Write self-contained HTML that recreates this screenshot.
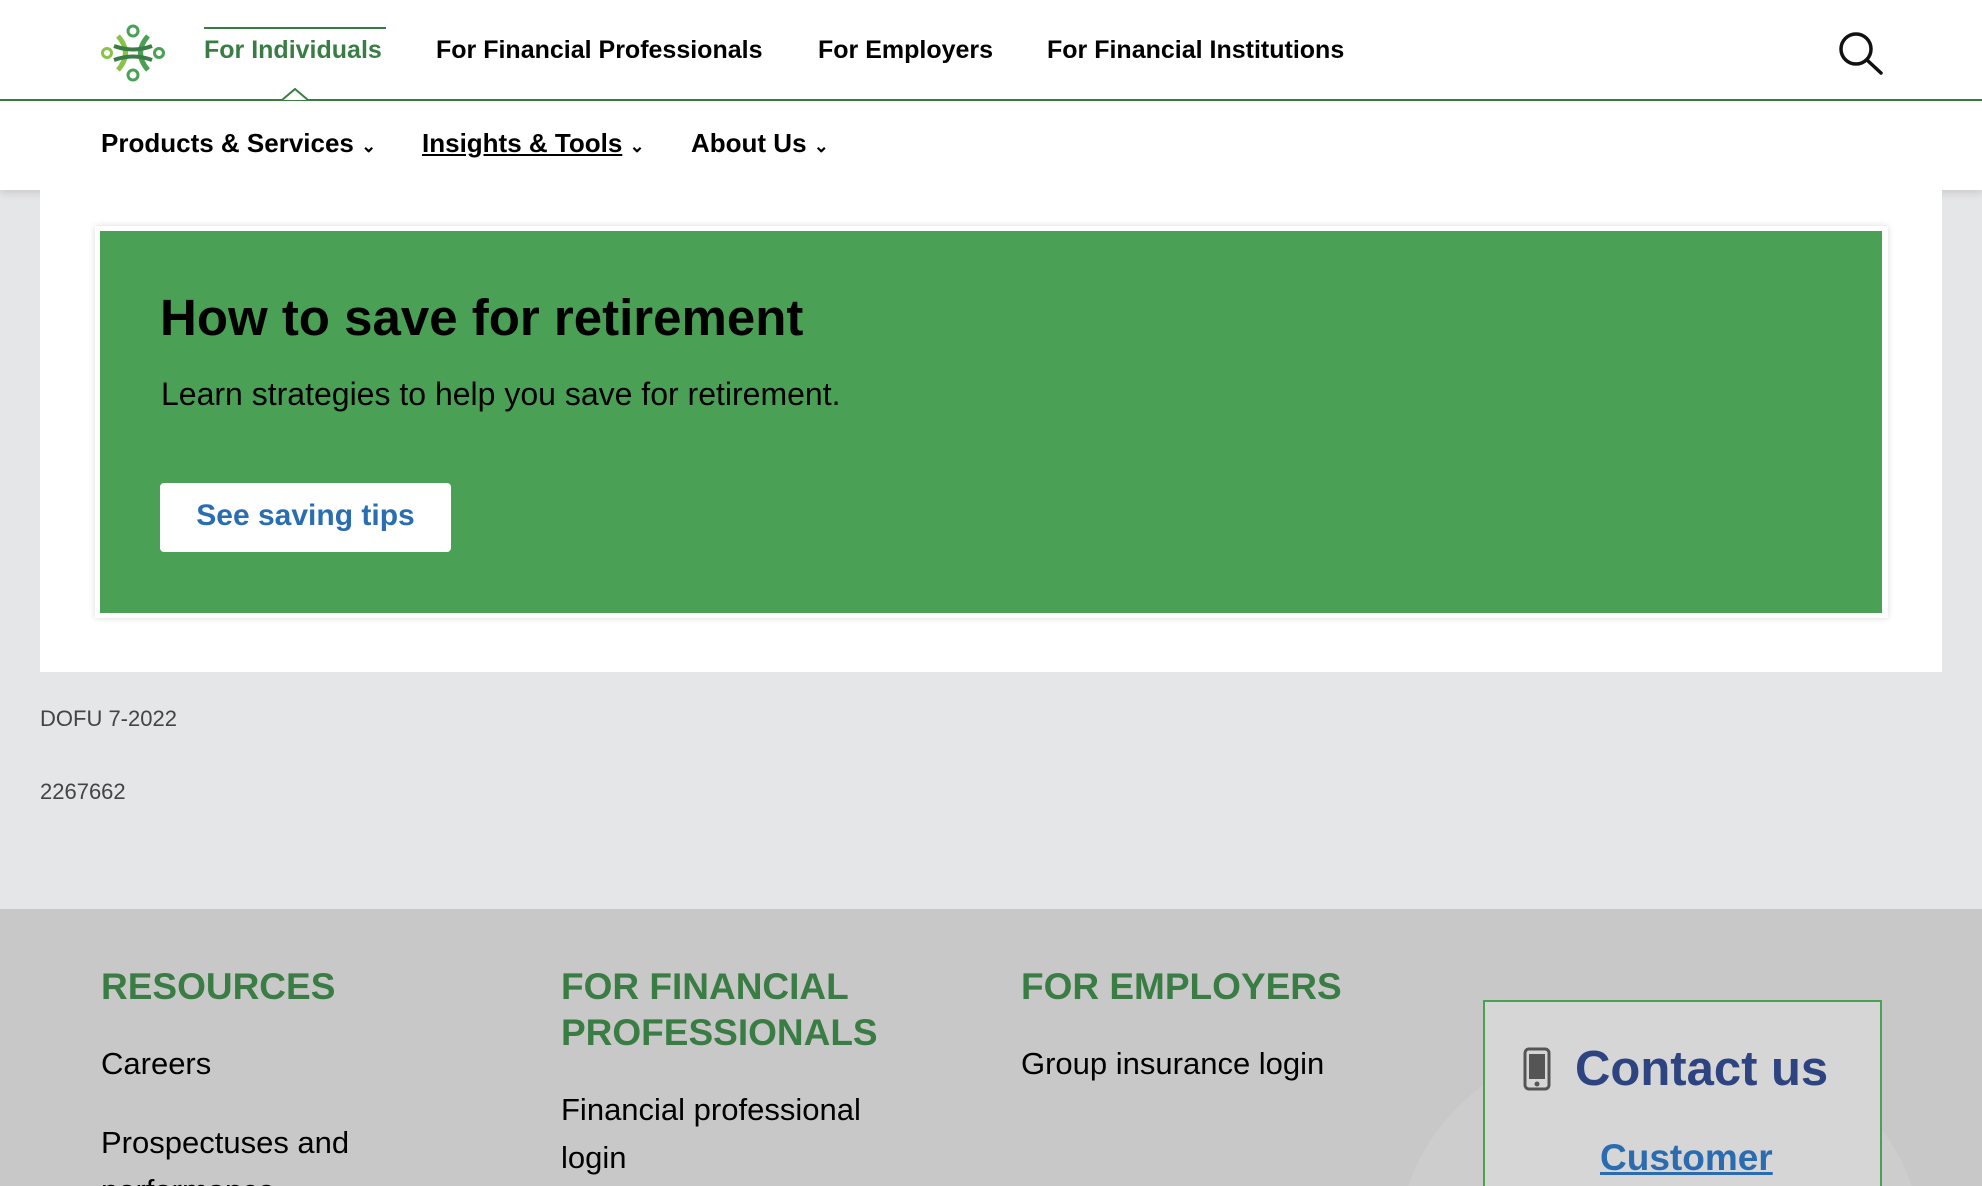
<!DOCTYPE html>
<html style="overflow:hidden;height:1186px"><head><meta charset="utf-8"><style>
*{margin:0;padding:0;box-sizing:border-box}
body{width:1982px;height:1186px;overflow:hidden;background:#e5e6e8;font-family:"Liberation Sans",sans-serif;position:relative;color:#000}
.a{position:absolute;white-space:nowrap}
.n{font-weight:bold;font-size:25px;top:36px}
.s{font-size:26px;top:128px;font-weight:bold}
.f{font-size:31px;color:#000}
.h{font-size:37px;font-weight:bold;color:#3a7d44;line-height:46px}
</style></head><body>
<div class="a" style="left:0;top:0;width:1982px;height:190px;background:#fff;box-shadow:0 3px 8px rgba(0,0,0,.12)"></div>
<div class="a" style="left:0;top:99px;width:1982px;height:2px;background:#3a7d44"></div>
<svg class="a" style="left:282px;top:88px" width="26" height="14"><path d="M0 12 L13 1 L26 12" fill="#fff" stroke="#3a7d44" stroke-width="2"/></svg>
<svg class="a" style="left:100px;top:24px" width="66" height="58" viewBox="0 0 66 58">
<circle cx="33" cy="7" r="5" fill="none" stroke="#4aa054" stroke-width="3"/>
<circle cx="33" cy="51" r="5" fill="none" stroke="#4aa054" stroke-width="3"/>
<circle cx="7" cy="29" r="4.5" fill="none" stroke="#8bc34a" stroke-width="3"/>
<circle cx="59" cy="29" r="4.5" fill="none" stroke="#4aa054" stroke-width="3"/>
<path d="M18 12 Q33 29 18 46" fill="none" stroke="#8bc34a" stroke-width="5"/>
<path d="M48 12 Q33 29 48 46" fill="none" stroke="#4aa054" stroke-width="5"/>
<path d="M14 22 Q33 29 52 22 M14 36 Q33 29 52 36" fill="none" stroke="#3a7d44" stroke-width="4"/>
</svg>
<div class="a" style="left:204px;top:27px;width:182px;height:2px;background:#3a7d44"></div>
<div class="a n" style="left:204px;color:#3a7d44">For Individuals</div>
<div class="a n" style="left:436px">For Financial Professionals</div>
<div class="a n" style="left:818px">For Employers</div>
<div class="a n" style="left:1047px">For Financial Institutions</div>
<svg class="a" style="left:1838px;top:31px" width="46" height="44"><circle cx="18" cy="18" r="15" fill="none" stroke="#111" stroke-width="3.5"/><path d="M29 29 L43 42" stroke="#111" stroke-width="3.5" stroke-linecap="round"/></svg>
<div class="a s" style="left:101px">Products &amp; Services <span style="font-size:18px">&#8964;</span></div>
<div class="a s" style="left:422px"><u>Insights &amp; Tools</u> <span style="font-size:18px">&#8964;</span></div>
<div class="a s" style="left:691px">About Us <span style="font-size:18px">&#8964;</span></div>
<div class="a" style="left:40px;top:190px;width:1902px;height:482px;background:#fff"></div>
<div class="a" style="left:95px;top:226px;width:1793px;height:392px;background:#fff;box-shadow:0 0 6px rgba(0,0,0,.15)"></div>
<div class="a" style="left:100px;top:231px;width:1782px;height:382px;background:#4aa054"></div>
<div class="a" style="left:160px;top:288px;font-size:51px;font-weight:bold">How to save for retirement</div>
<div class="a" style="left:161px;top:376px;font-size:32px">Learn strategies to help you save for retirement.</div>
<div class="a" style="left:160px;top:483px;width:291px;height:69px;background:#fff;border-radius:4px;color:#2a6db0;font-weight:bold;font-size:30px;text-align:center;line-height:66px">See saving tips</div>
<div class="a" style="left:40px;top:706px;font-size:22px;color:#444">DOFU 7-2022</div>
<div class="a" style="left:40px;top:779px;font-size:22px;color:#444">2267662</div>
<div class="a" style="left:0;top:909px;width:1982px;height:277px;background:#c8c8c8;overflow:hidden">
<div class="a" style="left:1400px;top:120px;width:520px;height:420px;border-radius:50%;background:#cdcdcd"></div>
<div class="a h" style="left:101px;top:55px">RESOURCES</div>
<div class="a h" style="left:561px;top:55px">FOR FINANCIAL<br>PROFESSIONALS</div>
<div class="a h" style="left:1021px;top:55px">FOR EMPLOYERS</div>
<div class="a f" style="left:101px;top:137px">Careers</div>
<div class="a f" style="left:101px;top:210px;line-height:48px">Prospectuses and<br>performance</div>
<div class="a f" style="left:561px;top:177px;line-height:48px">Financial professional<br>login</div>
<div class="a f" style="left:1021px;top:137px">Group insurance login</div>
<div class="a" style="left:1483px;top:91px;width:399px;height:260px;border:2px solid #4aa054;background:#d6d6d6"></div>
<svg class="a" style="left:1523px;top:138px" width="28" height="44"><rect x="2" y="2" width="24" height="40" rx="4" fill="none" stroke="#555" stroke-width="3"/><rect x="6" y="7" width="16" height="25" fill="#555"/><circle cx="14" cy="37" r="2.5" fill="#555"/></svg>
<div class="a" style="left:1575px;top:132px;font-size:49px;font-weight:bold;color:#2d4481">Contact us</div>
<div class="a" style="left:1600px;top:228px;font-size:37px;font-weight:bold;color:#2b6cb0;text-decoration:underline">Customer</div>
</div>
</body></html>
